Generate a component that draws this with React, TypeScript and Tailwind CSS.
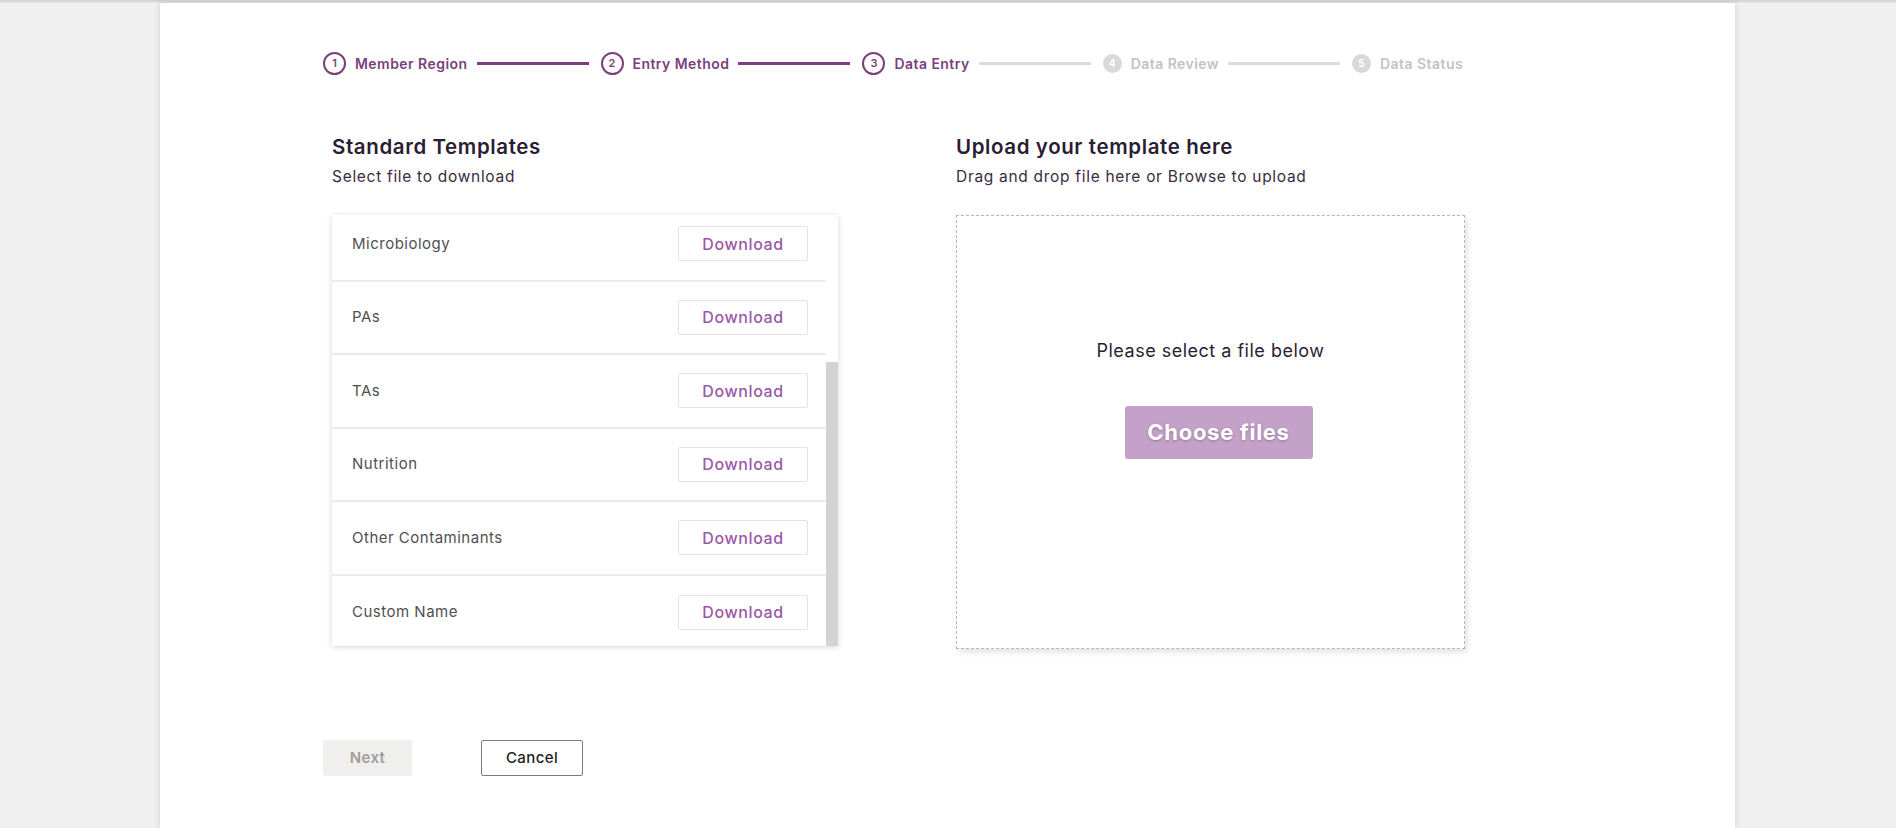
import React from 'react';

/* ─── Stepper ──────────────────────────────────────────────────── */

const steps = [
  { n: 1, label: 'Member Region', done: true },
  { n: 2, label: 'Entry Method', done: true },
  { n: 3, label: 'Data Entry', done: true },
  { n: 4, label: 'Data Review', done: false },
  { n: 5, label: 'Data Status', done: false },
];

function Stepper() {
  return (
    <div className="flex items-center">
      {steps.map((s, i) => (
        <div key={s.n} className="flex items-center">
          {s.done ? (
            <span className="w-[23px] h-[23px] rounded-full border-2 border-[#7b3f7e] flex items-center justify-center text-[11px] font-semibold text-[#7b3f7e]">
              {s.n}
            </span>
          ) : (
            <span className="w-[19px] h-[19px] rounded-full bg-[#d9d9d9] flex items-center justify-center text-[10px] font-bold text-white">
              {s.n}
            </span>
          )}
          <span
            className={`ml-[9px] text-[14px] font-semibold tracking-[0.45px] ${
              s.done ? 'text-[#7b3f7e]' : 'text-[#c3c3c3]'
            }`}
          >
            {s.label}
          </span>
          {i < steps.length - 1 && (
            <span
              className={`ml-[9px] mr-[12px] w-[112px] h-[3px] ${
                i < 2 ? 'bg-[#7b3f7e]' : 'bg-[#dcdcdc]'
              }`}
            />
          )}
        </div>
      ))}
    </div>
  );
}

/* ─── Template list ────────────────────────────────────────────── */

const templates = ['Microbiology', 'PAs', 'TAs', 'Nutrition', 'Other Contaminants', 'Custom Name'];

function TemplateList() {
  return (
    <div className="w-[506px] h-[431px] flex bg-white shadow-[0_1px_6px_rgba(0,0,0,0.16)]">
      <div className="flex-1 overflow-hidden">
        <div className="-mt-[7px]">
          {templates.map((t, i) => (
            <div
              key={t}
              className={`h-[73.5px] flex items-center justify-between pl-[20px] pr-[18px] ${
                i < templates.length - 1 ? 'border-b-2 border-[#ebebeb]' : ''
              }`}
            >
              <span className="text-[15px] text-[#505050] tracking-[0.5px]">{t}</span>
              <button className="w-[130px] h-[35px] border border-[#e4e4e4] rounded-[2px] text-[16px] font-medium tracking-[0.6px] text-[#9b58a8]">
                Download
              </button>
            </div>
          ))}
        </div>
      </div>
      <div className="w-[12px] flex flex-col">
        <div className="h-[147px] bg-white" />
        <div className="flex-1 bg-[#d3d3d3]" />
      </div>
    </div>
  );
}

/* ─── Page ─────────────────────────────────────────────────────── */

export default function App() {
  return (
    <div className="min-h-screen bg-[#eff0ef] font-['Inter',sans-serif] overflow-hidden">
      <div className="h-[3px] bg-gradient-to-b from-[#cfcfcf] to-[#e6e7e6]" />
      <div className="ml-[160px] w-[1575px] min-h-[825px] bg-white shadow-[0_0_6px_rgba(0,0,0,0.14)] pl-[163px] pt-[49px]">
        <Stepper />

        <div className="flex pl-[9px] mt-[60px]">
          <div className="w-[506px]">
            <h2 className="text-[20.5px] leading-[24px] font-semibold tracking-[0.6px] text-[#2b1d33]">
              Standard Templates
            </h2>
            <p className="mt-[8px] text-[15.5px] leading-[20px] tracking-[0.7px] text-[#3a2b3f]">
              Select file to download
            </p>
            <div className="mt-[28px]">
              <TemplateList />
            </div>
          </div>

          <div className="ml-[118px] w-[509px]">
            <h2 className="text-[20.5px] leading-[24px] font-semibold tracking-[0.6px] text-[#2b1d33]">
              Upload your template here
            </h2>
            <p className="mt-[8px] text-[15.5px] leading-[20px] tracking-[0.7px] text-[#3a2b3f]">
              Drag and drop file here or Browse to upload
            </p>
            <div className="mt-[28px] h-[434px] border border-dashed border-[#c8a9cb] shadow-[2px_3px_6px_rgba(0,0,0,0.12)] flex flex-col items-center pt-[123px]">
              <p className="text-[18px] leading-[24px] tracking-[0.5px] text-[#2b1d33]">Please select a file below</p>
              <button className="mt-[43px] ml-[16px] w-[188px] h-[53px] rounded-[3px] bg-[#c4a1c9] text-white text-[22px] font-bold tracking-[0.7px] [text-shadow:0_1px_3px_rgba(0,0,0,0.25)]">
                Choose files
              </button>
            </div>
          </div>
        </div>

        <div className="flex items-center mt-[91px]">
          <button className="w-[89px] h-[36px] rounded-[2px] bg-[#f1efee] text-[15px] font-semibold tracking-[0.4px] text-[#a09c9a]">
            Next
          </button>
          <button className="ml-[69px] w-[102px] h-[36px] rounded-[2px] border border-[#7a7a7a] text-[15px] font-medium tracking-[0.4px] text-[#222]">
            Cancel
          </button>
        </div>
      </div>
    </div>
  );
}
